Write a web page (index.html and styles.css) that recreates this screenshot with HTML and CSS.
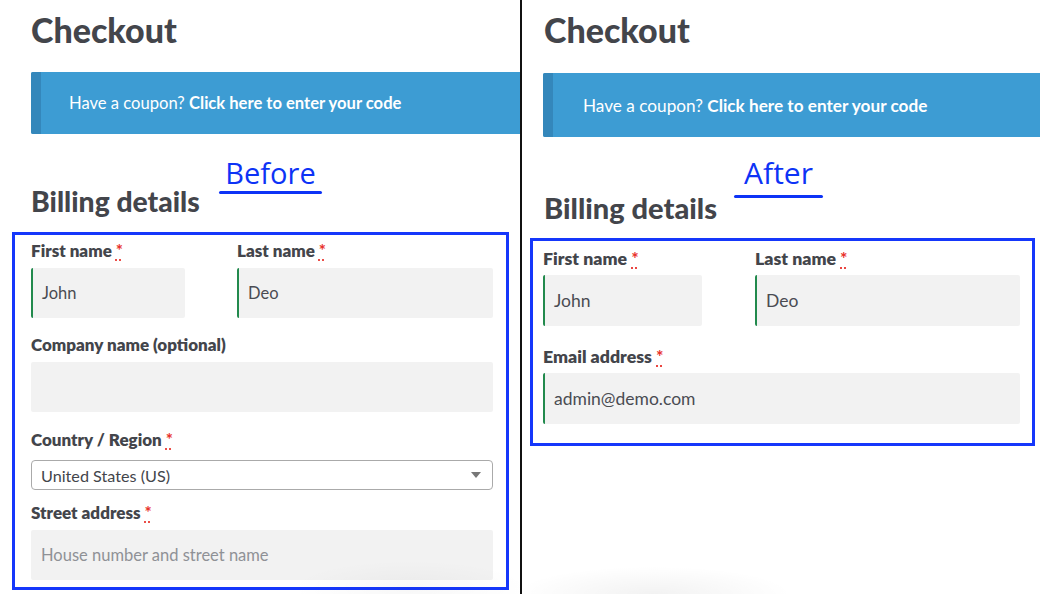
FILE: index.html
```html
<!DOCTYPE html>
<html lang="en">
<head>
<meta charset="utf-8">
<title>Checkout – Before / After</title>
<link rel="stylesheet" href="styles.css">
</head>
<body>
<div class="compare">
  <section class="panel panel-before">
    <h1 class="page-title">Checkout</h1>
    <div class="coupon">
      <span class="coupon-stripe"></span>
      <p class="coupon-text">Have a coupon? <b>Click here to enter your code</b></p>
    </div>
    <span class="tag tag-before">Before</span>
    <h2 class="billing-title">Billing details</h2>
    <div class="highlight">
      <div class="row-two">
        <div class="field">
          <label class="field-label">First name <abbr class="req">*</abbr></label>
          <div class="input valid">John</div>
        </div>
        <div class="field">
          <label class="field-label">Last name <abbr class="req">*</abbr></label>
          <div class="input valid">Deo</div>
        </div>
      </div>
      <div class="field gap-a">
        <label class="field-label">Company name (optional)</label>
        <div class="input"></div>
      </div>
      <div class="field gap-b">
        <label class="field-label">Country / Region <abbr class="req">*</abbr></label>
        <div class="select">
          <span>United States (US)</span>
          <span class="caret"></span>
        </div>
      </div>
      <div class="field gap-c">
        <label class="field-label">Street address <abbr class="req">*</abbr></label>
        <div class="input placeholder">House number and street name</div>
      </div>
    </div>
    <span class="shade shade-left"></span>
  </section>
  <div class="divider"></div>
  <section class="panel panel-after">
    <h1 class="page-title">Checkout</h1>
    <div class="coupon">
      <span class="coupon-stripe"></span>
      <p class="coupon-text">Have a coupon? <b>Click here to enter your code</b></p>
    </div>
    <span class="tag tag-after">After</span>
    <h2 class="billing-title">Billing details</h2>
    <div class="highlight">
      <div class="row-two">
        <div class="field">
          <label class="field-label">First name <abbr class="req">*</abbr></label>
          <div class="input valid">John</div>
        </div>
        <div class="field">
          <label class="field-label">Last name <abbr class="req">*</abbr></label>
          <div class="input valid">Deo</div>
        </div>
      </div>
      <div class="field gap-d">
        <label class="field-label">Email address <abbr class="req">*</abbr></label>
        <div class="input valid">admin@demo.com</div>
      </div>
    </div>
    <span class="shade shade-right"></span>
  </section>
</div>
</body>
</html>
```

FILE: styles.css
```css
* { box-sizing: border-box; }
html, body { margin: 0; padding: 0; background: #fff; }
body {
  width: 1040px;
  height: 594px;
  overflow: hidden;
  font-family: "Lato", "Liberation Sans", sans-serif;
  color: #43454b;
}
.compare {
  display: flex;
  height: 594px;
}
.panel {
  position: relative;
  display: flex;
  flex-direction: column;
  align-items: flex-start;
  overflow: hidden;
}
.panel-before { width: 520px; padding-left: 31px; }
.panel-after { flex: 1; padding-left: 21px; }
.divider {
  width: 2px;
  margin-right: 1px;
  background: #111;
  flex: none;
}

.page-title {
  margin: 10px 0 0;
  font-size: 34px;
  line-height: 40px;
  font-weight: 900;
  color: #43454b;
}

.coupon {
  display: flex;
  align-items: center;
  align-self: stretch;
  background: #3d9cd3;
  border-radius: 2px 0 0 2px;
  color: #fff;
  overflow: hidden;
}
.panel-before .coupon { margin-top: 22px; height: 62px; }
.panel-after .coupon { margin-top: 23px; margin-left: -1px; height: 64px; }
.coupon-stripe {
  align-self: stretch;
  width: 10px;
  background: #3487bb;
  flex: none;
}
.coupon-text {
  margin: 0;
  font-size: 16.6px;
}
.panel-before .coupon-text { padding-left: 28px; }
.panel-after .coupon-text { padding-left: 30px; font-size: 17.2px; }
.coupon-text b { font-weight: 700; }

.tag {
  position: absolute;
  font-family: "Open Sans", "Noto Sans", sans-serif;
  font-size: 29px;
  line-height: 34px;
  color: #0d33f6;
  text-align: center;
}
.tag::after {
  content: "";
  position: absolute;
  left: 0;
  right: 0;
  height: 3px;
  border-radius: 2px;
  background: #0d33f6;
}
.tag-before { left: 219px; top: 156px; width: 103px; }
.tag-before::after { top: 35px; }
.tag-after { left: 211px; top: 156px; width: 89px; font-size: 30px; }
.tag-after::after { top: 39px; }

.billing-title {
  font-size: 28.3px;
  line-height: 32px;
  font-weight: 900;
  color: #43454b;
}
.panel-before .billing-title { margin: 51px 0 0; }
.panel-after .billing-title { margin: 55px 0 0; font-size: 29px; }

.highlight {
  border: 3px solid #1537fb;
  display: flex;
  flex-direction: column;
}
.panel-before .highlight {
  margin: 15px 0 0 -19px;
  width: 497px;
  padding: 6px 0 7px 16px;
}
.panel-after .highlight {
  margin: 14px 0 0 -14px;
  width: 505px;
  padding: 8px 0 19px 10px;
}

.row-two {
  display: grid;
  column-gap: 52px;
}
.panel-before .row-two { grid-template-columns: 154px 256px; }
.panel-after .row-two { grid-template-columns: 159px 265px; column-gap: 53px; }

.field {
  display: flex;
  flex-direction: column;
}
.panel-before .field { width: 462px; }
.panel-after .field { width: 477px; }
.row-two .field { width: auto !important; }
.gap-a { margin-top: 17px; }
.gap-b { margin-top: 18px; }
.gap-c { margin-top: 13px; }
.gap-d { margin-top: 21px; }

.field-label {
  font-size: 17px;
  line-height: 20px;
  font-weight: 800;
  color: #43454b;
  margin-bottom: 7px;
}
.panel-after .field-label { font-size: 17.7px; margin-bottom: 6px; }
.req {
  color: #e8302a;
  font-weight: 700;
  text-decoration: underline dotted #e8302a;
  text-underline-offset: 3px;
}

.input {
  height: 50px;
  background: #f2f2f2;
  border-radius: 2px;
  padding-left: 10px;
  display: flex;
  align-items: center;
  font-size: 16.5px;
  color: #4a4c52;
}
.panel-after .input { height: 51px; font-size: 17.5px; }
.input.valid {
  border-left: 2px solid #228a4d;
  padding-left: 9px;
}
.input.placeholder { color: #8f9196; }

.select {
  height: 30px;
  margin-top: 3px;
  background: #fff;
  border: 1px solid #aaa;
  border-radius: 4px;
  padding: 0 9px;
  display: flex;
  align-items: center;
  justify-content: space-between;
  font-size: 16.2px;
  color: #43454b;
}
.caret {
  width: 0;
  height: 0;
  border-left: 5px solid transparent;
  border-right: 5px solid transparent;
  border-top: 6px solid #777;
  margin-right: 2px;
}

.shade {
  position: absolute;
  bottom: -28px;
  height: 56px;
  border-radius: 50%;
  background: radial-gradient(ellipse at center, rgba(0,0,0,0.05), rgba(0,0,0,0) 70%);
}
.shade-left { left: 290px; width: 240px; bottom: -22px; opacity: 0.6; }
.shade-right { left: -10px; width: 280px; }
```
